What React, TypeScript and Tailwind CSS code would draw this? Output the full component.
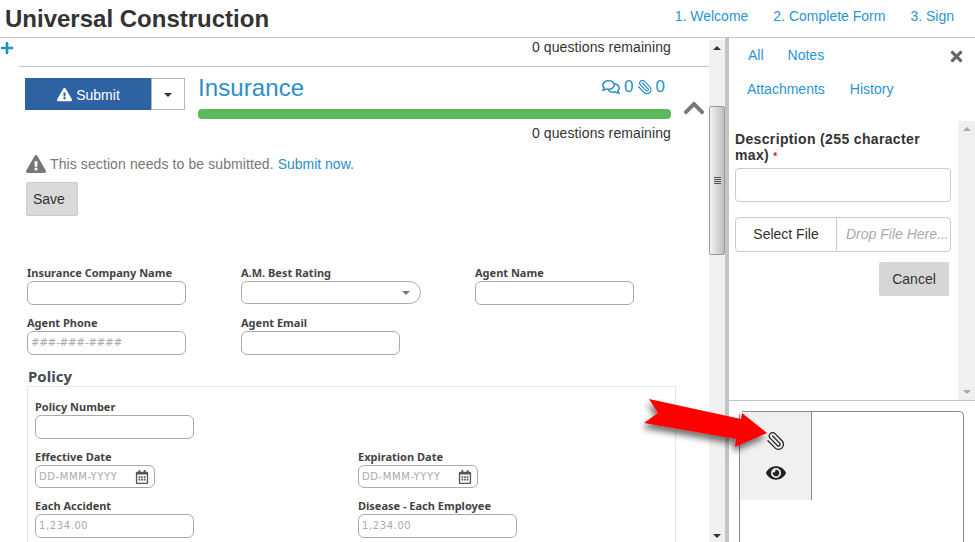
import { FaChevronUp, FaExclamationTriangle, FaEye, FaPlus, FaRegCalendarAlt, FaRegComments, FaTimes } from 'react-icons/fa'
import { Paperclip } from 'lucide-react'

const labelCls = "block font-['Noto_Sans',sans-serif] text-[11px] leading-[14px] font-bold text-[#444]"
const inputCls = 'block rounded-[6px] border border-[#aaa] bg-white'
const hintCls = "pl-[3px] font-['DejaVu_Sans',sans-serif] text-[10px] leading-[22px] text-[#aaa]"

function Field({ label, width, hint, calendar, wide, className }: { label: string; width: string; hint?: string; calendar?: boolean; wide?: boolean; className?: string }) {
  return (
    <div className={className}>
      <label className={labelCls}>{label}</label>
      <div className={`${inputCls} ${width} ${calendar ? 'h-[23px]' : 'h-[24px]'} mt-[1px] flex items-center justify-between`}>
        <span className={`${hintCls} ${wide ? 'tracking-[0.6px]' : ''}`}>{hint}</span>
        {calendar && <FaRegCalendarAlt className="mr-[5px] text-[14px] text-[#555]" />}
      </div>
    </div>
  )
}

function ScrollArrow({ up, light }: { up?: boolean; light?: boolean }) {
  return (
    <div className={`mx-auto h-0 w-0 border-x-[4px] border-x-transparent ${up ? 'border-b-[4px]' : 'border-t-[4px]'} ${light ? 'border-b-[#aaa] border-t-[#aaa]' : 'border-b-[#333] border-t-[#333]'}`} />
  )
}

export default function App() {
  return (
    <div className="relative flex h-[542px] w-[975px] flex-col overflow-hidden bg-white font-['Liberation_Sans',Arial,sans-serif] text-[14px] text-[#333]">
      <header className="flex h-[38px] shrink-0 items-center justify-between border-b border-[#c4c4c4] pl-[5px] pr-[21px]">
        <h1 className="text-[24px] leading-[36px] font-bold text-[#333]">Universal Construction</h1>
        <nav className="-mt-[5px] flex gap-[25px] text-[14px] text-[#2a94d6]">
          <a>1. Welcome</a>
          <a>2. Complete Form</a>
          <a>3. Sign</a>
        </nav>
      </header>

      <div className="flex min-h-0 flex-1">
        {/* left form column */}
        <main className="w-[709px] shrink-0 overflow-hidden">
          <div className="relative ml-[19px] flex h-[29px] items-center justify-end border-b border-[#c4c4c4] pr-[38px]">
            <FaPlus className="absolute -left-[19px] top-[3px] text-[14px] text-[#1b8fcf]" />
            <span className="-mt-[10px] tracking-[0.1px]">0 questions remaining</span>
          </div>

          <div className="flex pl-[25px] pt-[11px]">
            <div className="flex h-[32px] w-[160px] shrink-0">
              <button className="flex w-[126px] items-center justify-center gap-[4px] bg-[#2d62a3] pl-[1px] pt-[2px] text-white">
                <FaExclamationTriangle className="-mt-[2px] text-[15px]" />
                Submit
              </button>
              <button className="flex w-[34px] items-center justify-center border border-[#b5b5b5] bg-white">
                <span className="mt-[2px] h-0 w-0 border-x-[4px] border-t-[4px] border-x-transparent border-t-[#333]" />
              </button>
            </div>
            <div className="ml-[13px] w-[473px]">
              <div className="flex h-[31px] items-center justify-between">
                <span className="-mt-[12px] text-[24px] leading-[34px] tracking-[0.1px] text-[#2a8fcb]">Insurance</span>
                <span className="-mt-[14px] mr-[6px] flex items-center gap-[3px] text-[17px] text-[#2a8fcb]">
                  <FaRegComments className="text-[18px]" />
                  <span className="ml-[1px]">0</span>
                  <Paperclip className="h-[16px] w-[16px] -scale-x-100" strokeWidth={1.8} />
                  0
                </span>
              </div>
              <div className="h-[10px] rounded-[4px] bg-[#5cb85c]" />
              <div className="mt-[5px] text-right leading-[18px] tracking-[0.1px]">0 questions remaining</div>
            </div>
            <FaChevronUp className="ml-[11px] mt-[18px] text-[24px] text-[#777]" />
          </div>

          <div className="ml-[26px] mt-[12px] flex items-center gap-[4px] text-[#777]">
            <FaExclamationTriangle className="-mt-[2px] text-[20px]" />
            <span>
              <span className="tracking-[0.1px]">This section needs to be submitted.</span> <a className="text-[#2a8fcb]">Submit now.</a>
            </span>
          </div>
          <button className="ml-[26px] mt-[7px] block h-[34px] w-[52px] rounded-[2px] border border-[#ccc] bg-[#d9d9d9] pl-[6px] text-left text-[#333]">Save</button>

          <div className="ml-[27px] mt-[50px] grid grid-cols-[214px_234px_1fr] gap-y-[11px]">
            <Field label="Insurance Company Name" width="w-[159px]" />
            <div>
              <label className={labelCls}>A.M. Best Rating</label>
              <div className={`${inputCls} mt-[1px] flex h-[23px] w-[180px] items-center justify-end rounded-r-[12px] pr-[10px]`}>
                <span className="h-0 w-0 border-x-[4px] border-t-[4px] border-x-transparent border-t-[#777]" />
              </div>
            </div>
            <Field label="Agent Name" width="w-[159px]" />
            <Field label="Agent Phone" width="w-[159px]" hint="###-###-####" />
            <Field label="Agent Email" width="w-[159px]" />
          </div>

          <h2 className="ml-[28px] mt-[11px] font-['Noto_Sans',sans-serif] text-[15px] leading-[20px] font-bold text-[#444b58]">Policy</h2>
          <fieldset className="ml-[27px] w-[649px] border border-[#e6e6e6] px-[7px] pt-[13px] pb-[20px]">
            <Field label="Policy Number" width="w-[159px]" />
            <div className="mt-[11px] grid grid-cols-[323px_1fr] gap-y-[11px]">
              <Field label="Effective Date" width="w-[120px]" hint="DD-MMM-YYYY" calendar wide />
              <Field label="Expiration Date" width="w-[120px]" hint="DD-MMM-YYYY" calendar wide />
              <Field label="Each Accident" width="w-[159px]" hint="1,234.00" wide />
              <Field label="Disease - Each Employee" width="w-[159px]" hint="1,234.00" wide />
            </div>
          </fieldset>
        </main>

        {/* outer scrollbar */}
        <div className="mt-[2px] flex w-[16px] shrink-0 flex-col bg-[#f0f0f0] pt-[6px]">
          <ScrollArrow up />
          <div className="mt-[56px] flex h-[149px] flex-col items-center justify-center gap-[1px] rounded-[2px] border border-[#999] bg-gradient-to-r from-[#f4f4f4] to-[#bdbdbd]">
            <span className="h-px w-[7px] bg-[#555]" />
            <span className="h-px w-[7px] bg-[#555]" />
            <span className="h-px w-[7px] bg-[#555]" />
            <span className="h-px w-[7px] bg-[#555]" />
          </div>
          <div className="mt-auto pb-[4px]">
            <ScrollArrow />
          </div>
        </div>
        <div className="w-[4px] shrink-0 bg-[#c4c4c4]" />

        {/* right notes column */}
        <aside className="flex min-w-0 flex-1 flex-col">
          <div className="relative h-[83px] shrink-0 text-[#2a94d6]">
            <div className="flex gap-[24px] pl-[19px] pt-[8px] leading-[18px]">
              <a>All</a>
              <a>Notes</a>
            </div>
            <div className="flex gap-[25px] pl-[18px] pt-[16px] leading-[18px]">
              <a>Attachments</a>
              <a>History</a>
            </div>
            <FaTimes className="absolute right-[10px] top-[10px] text-[17px] text-[#666]" />
          </div>
          <div className="flex h-[280px] shrink-0 border-b border-[#c4c4c4]">
            <div className="w-[229px] shrink-0 pl-[6px] pr-[7px] pt-[10px]">
              <div className="h-[32px] text-[14px] leading-[16px] font-bold tracking-[0.35px]">
                Description (255 character max) <span className="text-[10px] leading-none text-[#d9262b]">*</span>
              </div>
              <div className="mt-[5px] h-[34px] rounded-[4px] border border-[#ccc]" />
              <div className="mt-[15px] flex h-[35px] rounded-[4px] border border-[#ccc]">
                <div className="flex w-[101px] items-center justify-center border-r border-[#ccc]">Select File</div>
                <div className="flex-1 overflow-hidden pl-[9px] leading-[33px] whitespace-nowrap text-[#aaa] italic">Drop File Here...</div>
              </div>
              <button className="mt-[10px] ml-[144px] block h-[34px] w-[70px] rounded-[2px] bg-[#d6d6d6]">Cancel</button>
            </div>
            <div className="flex flex-1 flex-col justify-between bg-[#f0f0f0] py-[6px]">
              <ScrollArrow up light />
              <ScrollArrow light />
            </div>
          </div>
          <div className="ml-[10px] mt-[10px] w-[225px] flex-1 rounded-t-[5px] border-x border-t border-[#888]">
            <div className="flex h-[88px] w-[72px] flex-col items-center gap-[12px] border-r border-[#888] bg-[#f0f0f0] pt-[19px]">
              <Paperclip className="h-[20px] w-[20px] -scale-x-100 text-[#222]" strokeWidth={1.5} />
              <FaEye className="text-[20px] text-[#222]" />
            </div>
          </div>
        </aside>
      </div>

      {/* annotation arrow over the page */}
      <svg className="absolute left-[640px] top-[395px] h-[70px] w-[140px]" viewBox="0 0 140 70">
        <defs>
          <filter id="arrowShadow" x="-20%" y="-30%" width="140%" height="170%">
            <feDropShadow dx="-2" dy="5" stdDeviation="3" floodColor="#000" floodOpacity="0.55" />
          </filter>
        </defs>
        <polygon points="9,4 18,18 4,28 96,44 95,52 127,38 102,18 101,24" fill="#ff0000" filter="url(#arrowShadow)" />
      </svg>
    </div>
  )
}
